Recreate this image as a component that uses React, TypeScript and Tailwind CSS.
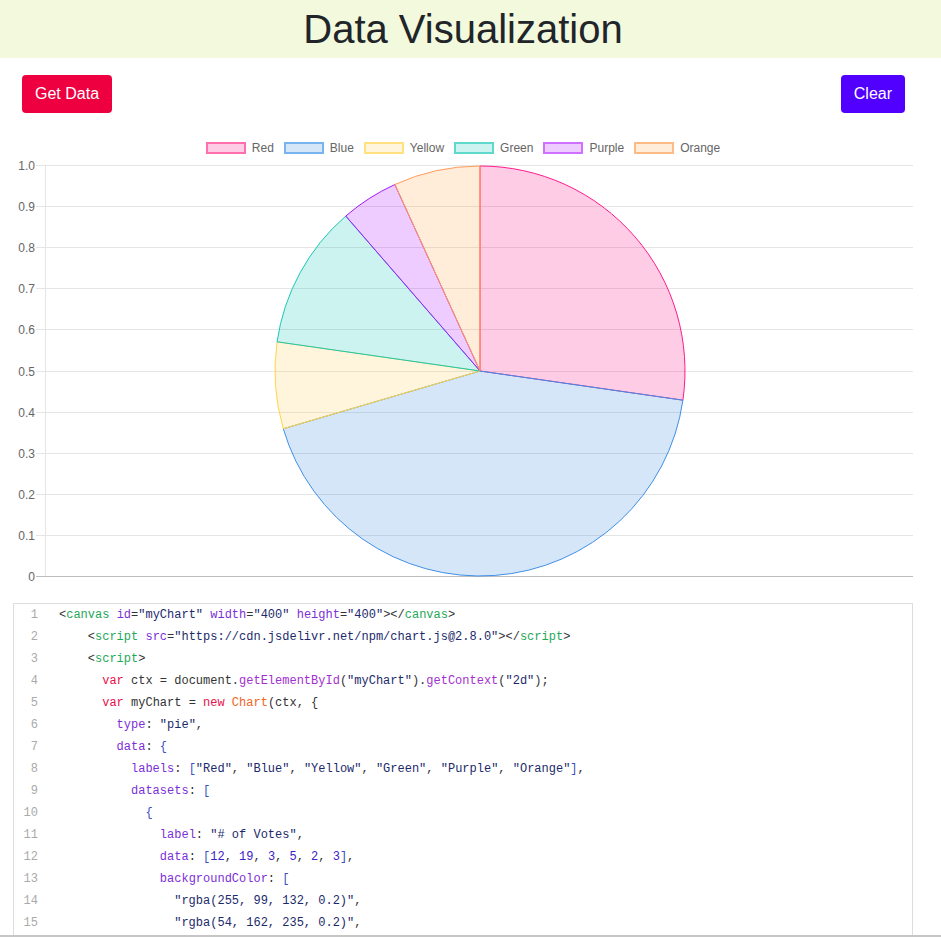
const slices = [
  { label: 'Red', value: 12, fill: 'rgba(255,0,128,0.2)', stroke: '#ff1a8c', box: 'bg-[rgba(255,0,128,0.2)] border-[#ff6fae]' },
  { label: 'Blue', value: 19, fill: 'rgba(50,130,225,0.2)', stroke: '#3f8fe6', box: 'bg-[rgba(50,130,225,0.2)] border-[#7ab4f0]' },
  { label: 'Yellow', value: 3, fill: 'rgba(255,205,80,0.2)', stroke: '#ffd54a', box: 'bg-[rgba(255,205,80,0.2)] border-[#ffe27f]' },
  { label: 'Green', value: 5, fill: 'rgba(0,195,175,0.2)', stroke: '#1cc7b5', box: 'bg-[rgba(0,195,175,0.2)] border-[#5fd9cc]' },
  { label: 'Purple', value: 2, fill: 'rgba(170,0,255,0.2)', stroke: '#a31aff', box: 'bg-[rgba(170,0,255,0.2)] border-[#cf70ff]' },
  { label: 'Orange', value: 3, fill: 'rgba(255,160,64,0.2)', stroke: '#ff9c5a', box: 'bg-[rgba(255,160,64,0.2)] border-[#ffbb85]' },
]

// token colours
const c = {
  p: 'text-[#333333]',
  tag: 'text-[#1fa85a]',
  attr: 'text-[#7b2fd8]',
  str: 'text-[#1b2a6b]',
  kw: 'text-[#e8114c]',
  fn: 'text-[#a22fd0]',
  cls: 'text-[#f0641e]',
  prop: 'text-[#7b2fd8]',
  num: 'text-[#3b22c8]',
  br: 'text-[#3a4fc0]',
}

type Tok = [string, string]

const lines: Tok[][] = [
  [['<', c.p], ['canvas', c.tag], [' ', c.p], ['id', c.attr], ['=', c.p], ['"myChart"', c.str], [' ', c.p], ['width', c.attr], ['=', c.p], ['"400"', c.str], [' ', c.p], ['height', c.attr], ['=', c.p], ['"400"', c.str], ['></', c.p], ['canvas', c.tag], ['>', c.p]],
  [['    <', c.p], ['script', c.tag], [' ', c.p], ['src', c.attr], ['=', c.p], ['"https://cdn.jsdelivr.net/npm/chart.js@2.8.0"', c.str], ['></', c.p], ['script', c.tag], ['>', c.p]],
  [['    <', c.p], ['script', c.tag], ['>', c.p]],
  [['      ', c.p], ['var', c.kw], [' ctx = document.', c.p], ['getElementById', c.fn], ['(', c.p], ['"myChart"', c.str], [').', c.p], ['getContext', c.fn], ['(', c.p], ['"2d"', c.str], [');', c.p]],
  [['      ', c.p], ['var', c.kw], [' myChart = ', c.p], ['new', c.kw], [' ', c.p], ['Chart', c.cls], ['(ctx, {', c.p]],
  [['        ', c.p], ['type', c.prop], [': ', c.p], ['"pie"', c.str], [',', c.p]],
  [['        ', c.p], ['data', c.prop], [': ', c.p], ['{', c.br]],
  [['          ', c.p], ['labels', c.prop], [': ', c.p], ['[', c.br], ['"Red"', c.str], [', ', c.p], ['"Blue"', c.str], [', ', c.p], ['"Yellow"', c.str], [', ', c.p], ['"Green"', c.str], [', ', c.p], ['"Purple"', c.str], [', ', c.p], ['"Orange"', c.str], [']', c.br], [',', c.p]],
  [['          ', c.p], ['datasets', c.prop], [': ', c.p], ['[', c.br]],
  [['            ', c.p], ['{', c.br]],
  [['              ', c.p], ['label', c.prop], [': ', c.p], ['"# of Votes"', c.str], [',', c.p]],
  [['              ', c.p], ['data', c.prop], [': ', c.p], ['[', c.br], ['12', c.num], [', ', c.p], ['19', c.num], [', ', c.p], ['3', c.num], [', ', c.p], ['5', c.num], [', ', c.p], ['2', c.num], [', ', c.p], ['3', c.num], [']', c.br], [',', c.p]],
  [['              ', c.p], ['backgroundColor', c.prop], [': ', c.p], ['[', c.br]],
  [['                ', c.p], ['"rgba(255, 99, 132, 0.2)"', c.str], [',', c.p]],
  [['                ', c.p], ['"rgba(54, 162, 235, 0.2)"', c.str], [',', c.p]],
]

function PieChart() {
  const cx = 467
  const cy = 216
  const r = 205
  const total = slices.reduce((s, x) => s + x.value, 0)
  let a0 = -Math.PI / 2
  const arcs = slices.map((s) => {
    const a1 = a0 + (s.value / total) * Math.PI * 2
    const x0 = cx + r * Math.cos(a0)
    const y0 = cy + r * Math.sin(a0)
    const x1 = cx + r * Math.cos(a1)
    const y1 = cy + r * Math.sin(a1)
    const large = a1 - a0 > Math.PI ? 1 : 0
    const d = `M${cx} ${cy} L${x0} ${y0} A${r} ${r} 0 ${large} 1 ${x1} ${y1} Z`
    a0 = a1
    return { d, ...s }
  })
  const ticks = [10, 9, 8, 7, 6, 5, 4, 3, 2, 1, 0]

  return (
    <svg width="900" height="448" className="block">
      <line x1="32.5" y1="10" x2="32.5" y2="421" stroke="#e5e5e5" />
      {ticks.map((t) => {
        const y = Math.round(421 - t * 41.1) + 0.5
        return (
          <g key={t}>
            <line x1="23" y1={y} x2="900" y2={y} stroke={t === 0 ? '#bdbdbd' : '#e5e5e5'} />
            <text x="22" y={y + 4} textAnchor="end" fontSize="12" fill="#666" fontFamily="'Liberation Sans', Arial, sans-serif">
              {t === 0 ? '0' : t === 10 ? '1.0' : `0.${t}`}
            </text>
          </g>
        )
      })}
      {arcs.map((a) => (
        <path key={a.label} d={a.d} fill={a.fill} stroke={a.stroke} strokeWidth="1" strokeLinejoin="bevel" />
      ))}
    </svg>
  )
}

export default function App() {
  return (
    <div className="h-[937px] overflow-hidden flex flex-col bg-white font-['Liberation_Sans',Arial,sans-serif]">
      <header className="h-[58px] shrink-0 bg-[#f2f9dd] flex items-center justify-center pr-[15px]">
        <h1 className="text-[40px] leading-none text-[#212529]">Data Visualization</h1>
      </header>

      <div className="ml-[13px] w-[900px] flex flex-col flex-1 min-h-0">
        <div className="mt-[17px] flex justify-between pl-[9px] pr-[8px]">
          <button className="h-[38px] px-[13px] rounded-[4px] bg-[#ee0040] text-white text-base">Get Data</button>
          <button className="h-[38px] px-[13px] rounded-[4px] bg-[#5100ff] text-white text-base">Clear</button>
        </div>

        <div className="mt-[29px] flex justify-center gap-[10px]">
          {slices.map((s) => (
            <div key={s.label} className="flex items-center gap-[6px] h-3">
              <span className={`w-10 h-3 border-2 ${s.box}`} />
              <span className="text-[12px] leading-3 text-[#666]">{s.label}</span>
            </div>
          ))}
        </div>

        <div className="mt-px">
          <PieChart />
        </div>

        <div className="flex-1 min-h-0 overflow-hidden border border-b-0 border-[#dddddd] font-['Liberation_Mono',monospace] text-[12px] leading-[22px]">
          {lines.map((toks, i) => (
            <div key={i} className="flex">
              <span className="w-[33px] shrink-0 pr-[9px] text-right text-[#aaaaaa]">{i + 1}</span>
              <span className="pl-[12px] whitespace-pre">
                {toks.map((t, j) => (
                  <span key={j} className={t[1]}>{t[0]}</span>
                ))}
              </span>
            </div>
          ))}
        </div>
      </div>
      <div className="h-[2px] shrink-0 bg-[#c6c6c6]" />
    </div>
  )
}
